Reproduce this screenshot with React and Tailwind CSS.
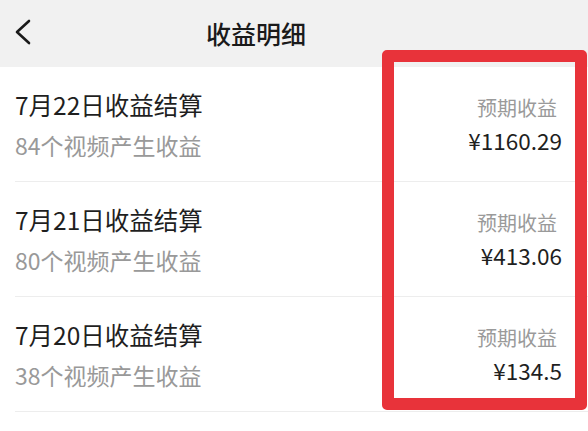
const rows = [
  { date: "7月22日收益结算", count: "84个视频产生收益", amount: "¥1160.29" },
  { date: "7月21日收益结算", count: "80个视频产生收益", amount: "¥413.06" },
  { date: "7月20日收益结算", count: "38个视频产生收益", amount: "¥134.5" },
];

function App() {
  return (
    <div
      className="relative h-[431px] w-[588px] overflow-hidden bg-white"
      style={{ fontFamily: '"Noto Sans CJK SC", "Noto Sans", sans-serif' }}
    >
      {/* HEADER */}
      <div className="relative flex h-[67px] items-center bg-[#f1f1f1] pl-[206px]">
        <svg
          className="absolute left-[12px] top-[18px]"
          width="22"
          height="28"
          viewBox="0 0 22 28"
          fill="none"
        >
          <path
            d="M17 3 L5 14 L17 25"
            stroke="#1a1a1a"
            strokeWidth="2.6"
            strokeLinecap="round"
            strokeLinejoin="round"
          />
        </svg>
        <h1 className="text-[25px] font-medium text-[#1a1a1a]">收益明细</h1>
      </div>

      {/* LIST */}
      <div>
        {rows.map((row) => (
          <div key={row.date} className="pl-[15px]">
            <div className="flex h-[115px] items-center justify-between border-b border-[#ededed] pr-[26px]">
              <div className="flex flex-col gap-[9px]">
                <p className="text-[24.5px] leading-[32px] text-[#1f1f1f]">
                  {row.date}
                </p>
                <p className="text-[23px] leading-[30px] text-[#999999]">
                  {row.count}
                </p>
              </div>
              <div className="flex flex-col items-end gap-[3px]">
                <p className="pr-[5px] text-[20px] leading-[28px] text-[#9a9a9a]">
                  预期收益
                </p>
                <p className="text-[22.5px] leading-[30px] text-[#1f1f1f]">
                  {row.amount}
                </p>
              </div>
            </div>
          </div>
        ))}
      </div>

      {/* RED HIGHLIGHT BOX */}
      <div className="absolute left-[382px] top-[50px] h-[360px] w-[205px] rounded-[5px] border-[12px] border-[#e8333a]" />
    </div>
  );
}

export default App;
